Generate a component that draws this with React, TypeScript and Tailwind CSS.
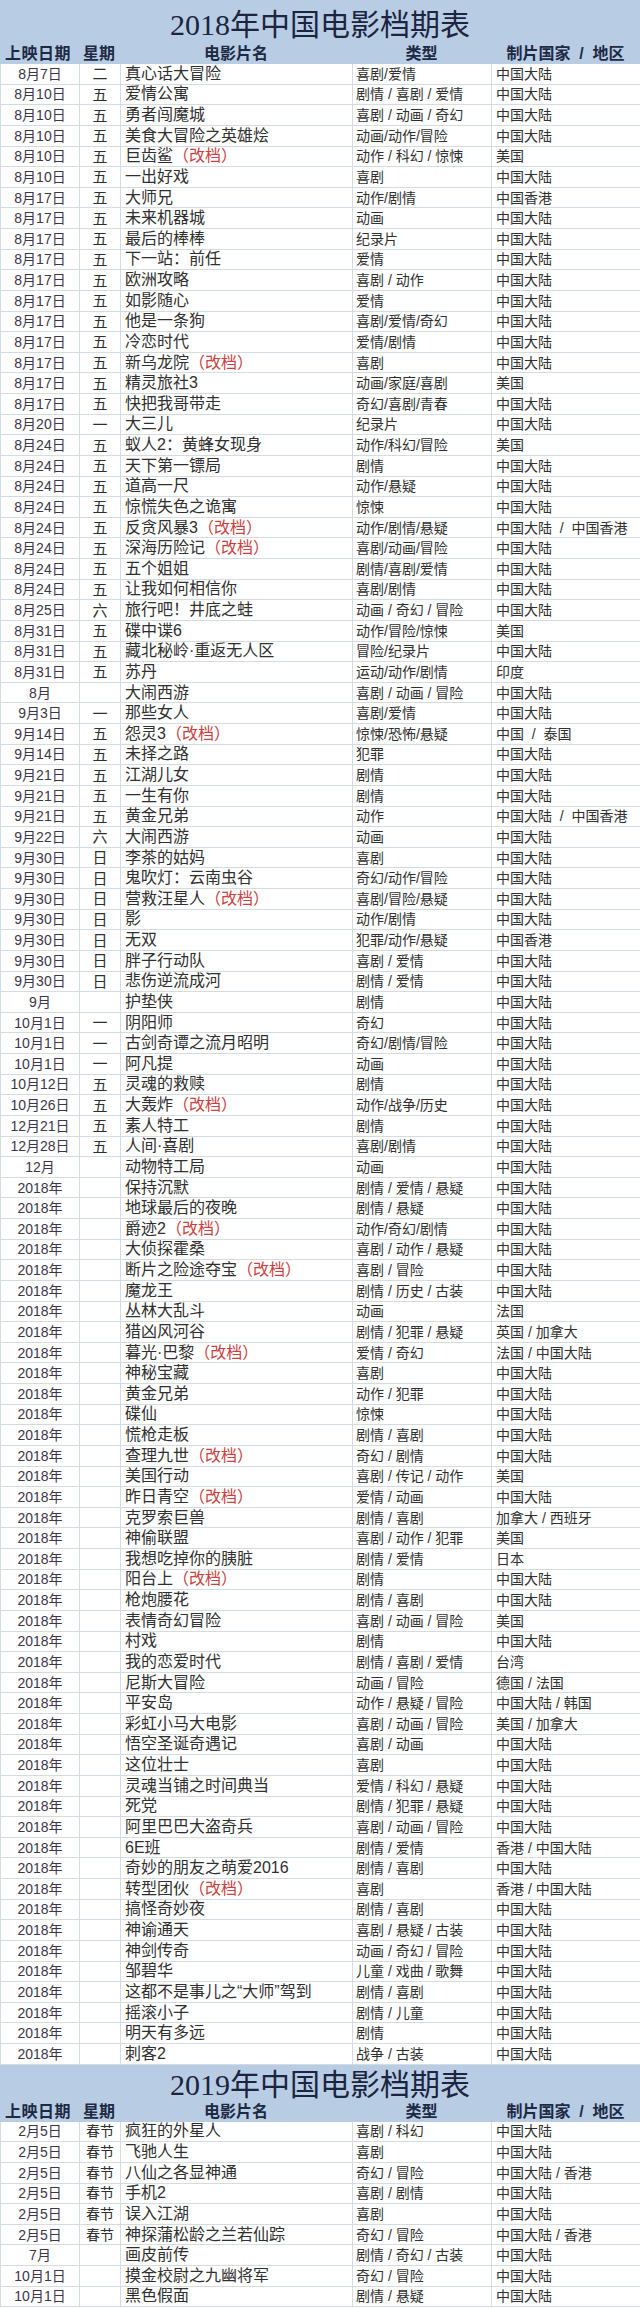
import type { ReactNode } from 'react';

type Row = [string, string, string, string, string];

const rows2018: Row[] = [
  ['8月7日', '二', '真心话大冒险', '喜剧/爱情', '中国大陆'],
  ['8月10日', '五', '爱情公寓', '剧情 / 喜剧 / 爱情', '中国大陆'],
  ['8月10日', '五', '勇者闯魔城', '喜剧 / 动画 / 奇幻', '中国大陆'],
  ['8月10日', '五', '美食大冒险之英雄烩', '动画/动作/冒险', '中国大陆'],
  ['8月10日', '五', '巨齿鲨（改档）', '动作 / 科幻 / 惊悚', '美国'],
  ['8月10日', '五', '一出好戏', '喜剧', '中国大陆'],
  ['8月17日', '五', '大师兄', '动作/剧情', '中国香港'],
  ['8月17日', '五', '未来机器城', '动画', '中国大陆'],
  ['8月17日', '五', '最后的棒棒', '纪录片', '中国大陆'],
  ['8月17日', '五', '下一站：前任', '爱情', '中国大陆'],
  ['8月17日', '五', '欧洲攻略', '喜剧 / 动作', '中国大陆'],
  ['8月17日', '五', '如影随心', '爱情', '中国大陆'],
  ['8月17日', '五', '他是一条狗', '喜剧/爱情/奇幻', '中国大陆'],
  ['8月17日', '五', '冷恋时代', '爱情/剧情', '中国大陆'],
  ['8月17日', '五', '新乌龙院（改档）', '喜剧', '中国大陆'],
  ['8月17日', '五', '精灵旅社3', '动画/家庭/喜剧', '美国'],
  ['8月17日', '五', '快把我哥带走', '奇幻/喜剧/青春', '中国大陆'],
  ['8月20日', '一', '大三儿', '纪录片', '中国大陆'],
  ['8月24日', '五', '蚁人2：黄蜂女现身', '动作/科幻/冒险', '美国'],
  ['8月24日', '五', '天下第一镖局', '剧情', '中国大陆'],
  ['8月24日', '五', '道高一尺', '动作/悬疑', '中国大陆'],
  ['8月24日', '五', '惊慌失色之诡寓', '惊悚', '中国大陆'],
  ['8月24日', '五', '反贪风暴3（改档）', '动作/剧情/悬疑', '中国大陆  /  中国香港'],
  ['8月24日', '五', '深海历险记（改档）', '喜剧/动画/冒险', '中国大陆'],
  ['8月24日', '五', '五个姐姐', '剧情/喜剧/爱情', '中国大陆'],
  ['8月24日', '五', '让我如何相信你', '喜剧/剧情', '中国大陆'],
  ['8月25日', '六', '旅行吧！井底之蛙', '动画 / 奇幻 / 冒险', '中国大陆'],
  ['8月31日', '五', '碟中谍6', '动作/冒险/惊悚', '美国'],
  ['8月31日', '五', '藏北秘岭·重返无人区', '冒险/纪录片', '中国大陆'],
  ['8月31日', '五', '苏丹', '运动/动作/剧情', '印度'],
  ['8月', '', '大闹西游', '喜剧 / 动画 / 冒险', '中国大陆'],
  ['9月3日', '一', '那些女人', '喜剧/爱情', '中国大陆'],
  ['9月14日', '五', '怨灵3（改档）', '惊悚/恐怖/悬疑', '中国  /  泰国'],
  ['9月14日', '五', '未择之路', '犯罪', '中国大陆'],
  ['9月21日', '五', '江湖儿女', '剧情', '中国大陆'],
  ['9月21日', '五', '一生有你', '剧情', '中国大陆'],
  ['9月21日', '五', '黄金兄弟', '动作', '中国大陆  /  中国香港'],
  ['9月22日', '六', '大闹西游', '动画', '中国大陆'],
  ['9月30日', '日', '李茶的姑妈', '喜剧', '中国大陆'],
  ['9月30日', '日', '鬼吹灯：云南虫谷', '奇幻/动作/冒险', '中国大陆'],
  ['9月30日', '日', '营救汪星人（改档）', '喜剧/冒险/悬疑', '中国大陆'],
  ['9月30日', '日', '影', '动作/剧情', '中国大陆'],
  ['9月30日', '日', '无双', '犯罪/动作/悬疑', '中国香港'],
  ['9月30日', '日', '胖子行动队', '喜剧 / 爱情', '中国大陆'],
  ['9月30日', '日', '悲伤逆流成河', '剧情 / 爱情', '中国大陆'],
  ['9月', '', '护垫侠', '剧情', '中国大陆'],
  ['10月1日', '一', '阴阳师', '奇幻', '中国大陆'],
  ['10月1日', '一', '古剑奇谭之流月昭明', '奇幻/剧情/冒险', '中国大陆'],
  ['10月1日', '一', '阿凡提', '动画', '中国大陆'],
  ['10月12日', '五', '灵魂的救赎', '剧情', '中国大陆'],
  ['10月26日', '五', '大轰炸（改档）', '动作/战争/历史', '中国大陆'],
  ['12月21日', '五', '素人特工', '剧情', '中国大陆'],
  ['12月28日', '五', '人间·喜剧', '喜剧/剧情', '中国大陆'],
  ['12月', '', '动物特工局', '动画', '中国大陆'],
  ['2018年', '', '保持沉默', '剧情 / 爱情 / 悬疑', '中国大陆'],
  ['2018年', '', '地球最后的夜晚', '剧情 / 悬疑', '中国大陆'],
  ['2018年', '', '爵迹2（改档）', '动作/奇幻/剧情', '中国大陆'],
  ['2018年', '', '大侦探霍桑', '喜剧 / 动作 / 悬疑', '中国大陆'],
  ['2018年', '', '断片之险途夺宝（改档）', '喜剧 / 冒险', '中国大陆'],
  ['2018年', '', '魔龙王', '剧情 / 历史 / 古装', '中国大陆'],
  ['2018年', '', '丛林大乱斗', '动画', '法国'],
  ['2018年', '', '猎凶风河谷', '剧情 / 犯罪 / 悬疑', '英国 / 加拿大'],
  ['2018年', '', '暮光·巴黎（改档）', '爱情 / 奇幻', '法国 / 中国大陆'],
  ['2018年', '', '神秘宝藏', '喜剧', '中国大陆'],
  ['2018年', '', '黄金兄弟', '动作 / 犯罪', '中国大陆'],
  ['2018年', '', '碟仙', '惊悚', '中国大陆'],
  ['2018年', '', '慌枪走板', '剧情 / 喜剧', '中国大陆'],
  ['2018年', '', '查理九世（改档）', '奇幻 / 剧情', '中国大陆'],
  ['2018年', '', '美国行动', '喜剧 / 传记 / 动作', '美国'],
  ['2018年', '', '昨日青空（改档）', '爱情 / 动画', '中国大陆'],
  ['2018年', '', '克罗索巨兽', '剧情 / 喜剧', '加拿大 / 西班牙'],
  ['2018年', '', '神偷联盟', '喜剧 / 动作 / 犯罪', '美国'],
  ['2018年', '', '我想吃掉你的胰脏', '剧情 / 爱情', '日本'],
  ['2018年', '', '阳台上（改档）', '剧情', '中国大陆'],
  ['2018年', '', '枪炮腰花', '剧情 / 喜剧', '中国大陆'],
  ['2018年', '', '表情奇幻冒险', '喜剧 / 动画 / 冒险', '美国'],
  ['2018年', '', '村戏', '剧情', '中国大陆'],
  ['2018年', '', '我的恋爱时代', '剧情 / 喜剧 / 爱情', '台湾'],
  ['2018年', '', '尼斯大冒险', '动画 / 冒险', '德国 / 法国'],
  ['2018年', '', '平安岛', '动作 / 悬疑 / 冒险', '中国大陆 / 韩国'],
  ['2018年', '', '彩虹小马大电影', '喜剧 / 动画 / 冒险', '美国 / 加拿大'],
  ['2018年', '', '悟空圣诞奇遇记', '喜剧 / 动画', '中国大陆'],
  ['2018年', '', '这位壮士', '喜剧', '中国大陆'],
  ['2018年', '', '灵魂当铺之时间典当', '爱情 / 科幻 / 悬疑', '中国大陆'],
  ['2018年', '', '死党', '剧情 / 犯罪 / 悬疑', '中国大陆'],
  ['2018年', '', '阿里巴巴大盗奇兵', '喜剧 / 动画 / 冒险', '中国大陆'],
  ['2018年', '', '6E班', '剧情 / 爱情', '香港 / 中国大陆'],
  ['2018年', '', '奇妙的朋友之萌爱2016', '剧情 / 喜剧', '中国大陆'],
  ['2018年', '', '转型团伙（改档）', '喜剧', '香港 / 中国大陆'],
  ['2018年', '', '搞怪奇妙夜', '剧情 / 喜剧', '中国大陆'],
  ['2018年', '', '神谕通天', '喜剧 / 悬疑 / 古装', '中国大陆'],
  ['2018年', '', '神剑传奇', '动画 / 奇幻 / 冒险', '中国大陆'],
  ['2018年', '', '邹碧华', '儿童 / 戏曲 / 歌舞', '中国大陆'],
  ['2018年', '', '这都不是事儿之“大师”驾到', '剧情 / 喜剧', '中国大陆'],
  ['2018年', '', '摇滚小子', '剧情 / 儿童', '中国大陆'],
  ['2018年', '', '明天有多远', '剧情', '中国大陆'],
  ['2018年', '', '刺客2', '战争 / 古装', '中国大陆'],
];

const rows2019: Row[] = [
  ['2月5日', '春节', '疯狂的外星人', '喜剧 / 科幻', '中国大陆'],
  ['2月5日', '春节', '飞驰人生', '喜剧', '中国大陆'],
  ['2月5日', '春节', '八仙之各显神通', '奇幻 / 冒险', '中国大陆 / 香港'],
  ['2月5日', '春节', '手机2', '喜剧 / 剧情', '中国大陆'],
  ['2月5日', '春节', '误入江湖', '喜剧', '中国大陆'],
  ['2月5日', '春节', '神探蒲松龄之兰若仙踪', '奇幻 / 冒险', '中国大陆 / 香港'],
  ['7月', '', '画皮前传', '剧情 / 奇幻 / 古装', '中国大陆'],
  ['10月1日', '', '摸金校尉之九幽将军', '奇幻 / 冒险', '中国大陆'],
  ['10月1日', '', '黑色假面', '剧情 / 悬疑', '中国大陆'],
];

const cjk = '"Liberation Sans", "Noto Sans CJK SC", sans-serif';
const grid = 'grid grid-cols-[79px_41px_232px_139px_149px]';
const cell = 'flex items-center border-b border-r border-[#d5dbe3] overflow-hidden whitespace-pre';

function MovieTitle({ text }: { text: string }): ReactNode {
  const tag = '（改档）';
  if (!text.endsWith(tag)) return text;
  return (
    <>
      {text.slice(0, -tag.length)}
      <span className="text-[#c9413f]">{tag}</span>
    </>
  );
}

function Section({ year, rows, titleH, first }: { year: string; rows: Row[]; titleH: string; first?: boolean }) {
  return (
    <section>
      <div className={`bg-[#b8cce4] ${titleH} flex items-end justify-center ${first ? 'pb-[4px]' : 'pb-[2px]'}`}>
        <h1
          className="text-[30px] leading-none text-[#1b2440]"
          style={{ fontFamily: '"Liberation Serif", "Noto Sans CJK SC", serif' }}
        >
          {year}年中国电影档期表
        </h1>
      </div>
      <div className={`${grid} bg-[#b8cce4] h-[20px] text-[16px] font-bold text-[#1d2a44] leading-none`}>
        <div className="flex items-center pl-[5px] tracking-[0.5px]">上映日期</div>
        <div className="flex items-center pl-[4px]">星期</div>
        <div className="flex items-center justify-center">电影片名</div>
        <div className="flex items-center justify-center">类型</div>
        <div className="flex items-center justify-center whitespace-pre">制片国家  /  地区</div>
      </div>
      <div className="border-l border-[#d5dbe3] bg-white">
        {rows.map((r, i) => (
          <div key={i} className={`${grid} h-[20.63px] leading-none text-[#2f2f2f]`}>
            <div className={`${cell} justify-center text-[14px] text-[#3d3549]`}>{r[0]}</div>
            <div className={`${cell} justify-center ${r[1].length > 1 ? 'text-[14px]' : 'text-[15px]'}`}>{r[1]}</div>
            <div className={`${cell} pl-[4px] text-[16px]`}>
              <MovieTitle text={r[2]} />
            </div>
            <div className={`${cell} pl-[3px] text-[14px]`}>{r[3]}</div>
            <div className={`${cell} pl-[4px] text-[14px]`}>{r[4]}</div>
          </div>
        ))}
      </div>
    </section>
  );
}

export default function App() {
  return (
    <div className="w-[640px] bg-white" style={{ fontFamily: cjk }}>
      <Section year="2018" rows={rows2018} titleH="h-[44px]" first />
      <Section year="2019" rows={rows2019} titleH="h-[37px]" />
    </div>
  );
}
